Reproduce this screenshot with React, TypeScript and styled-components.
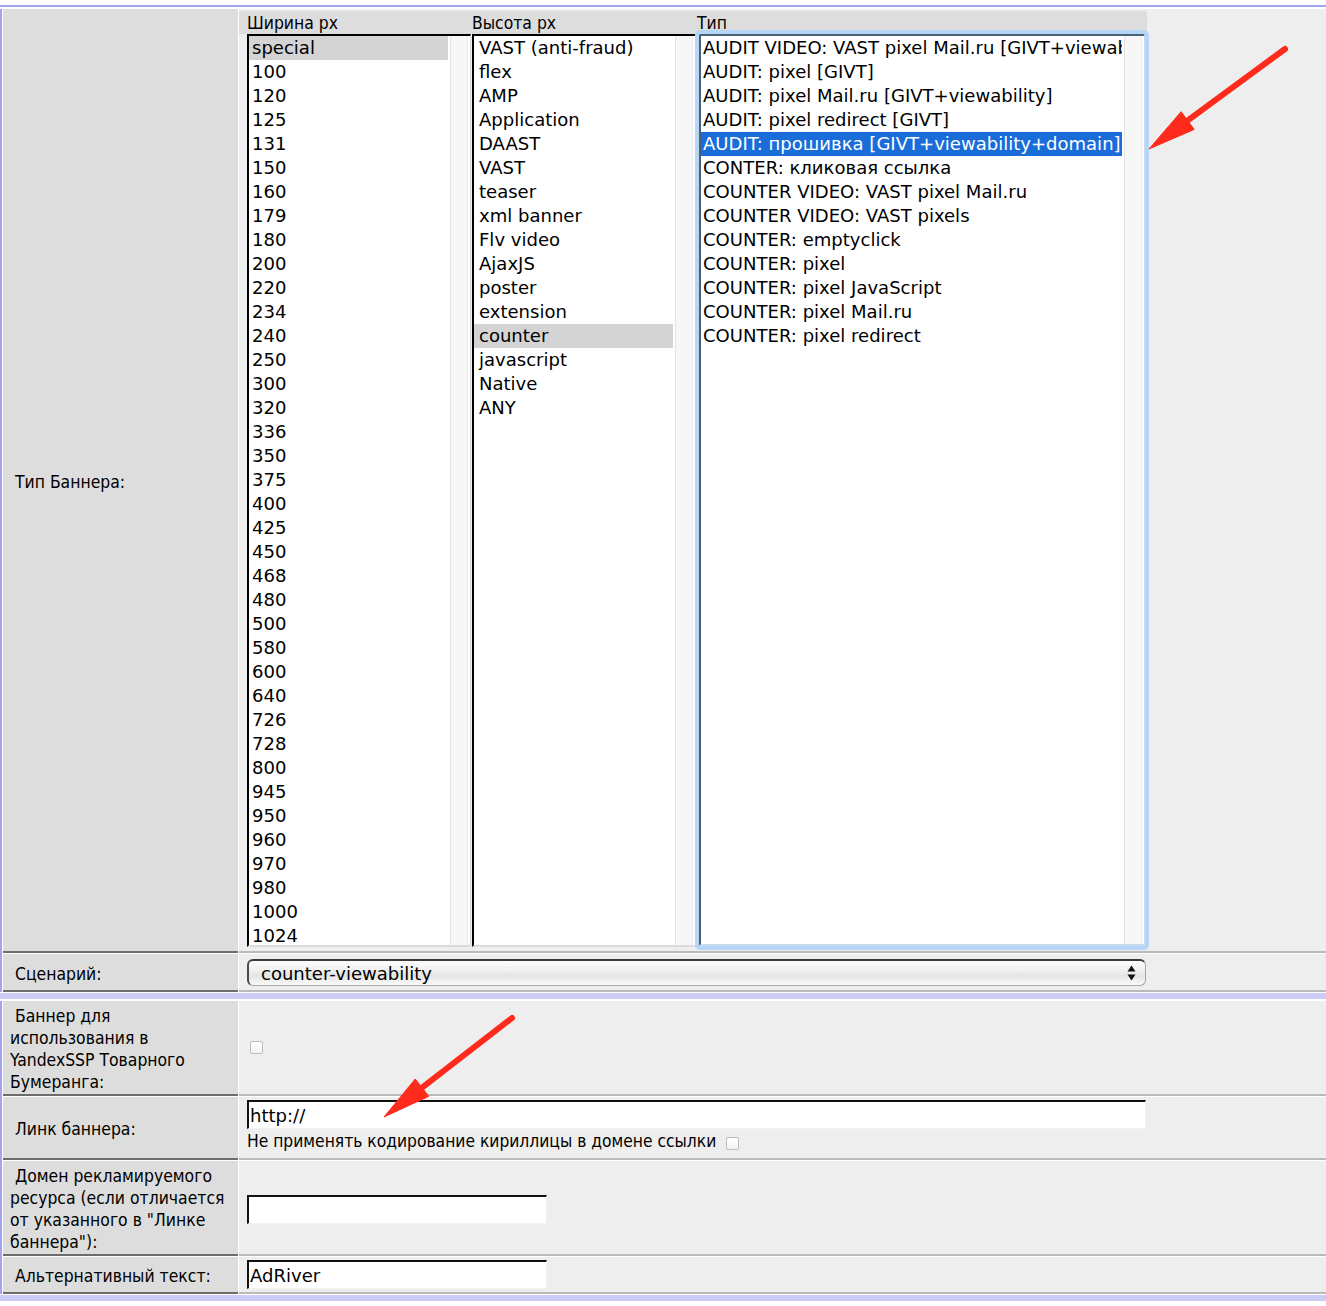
import React from "react";
import styled, { createGlobalStyle, css } from "styled-components";

const LABEL_FONT = `"DejaVu Sans Condensed", "DejaVu Sans", "Noto Sans", sans-serif`;
const CONTROL_FONT = `"DejaVu Sans", Verdana, sans-serif`;

const GlobalStyle = createGlobalStyle`
  html, body {
    margin: 0;
    padding: 0;
    background: #fff;
  }
  body {
    font-family: ${LABEL_FONT};
    color: #000;
  }
`;

const Page = styled.div`
  position: relative;
  width: 1326px;
  height: 1306px;
  overflow: hidden;
  padding-top: 5px;
  box-sizing: border-box;
`;

const TopLine = styled.div`
  height: 2px;
  background: #a3a3ef;
  margin-bottom: 2px;
`;

const Form = styled.div`
  border-left: 2px solid #a3a3ef;
  padding-left: 1px;
`;

const Row = styled.div`
  display: grid;
  grid-template-columns: 235px 1fr;
  column-gap: 1px;
  margin-bottom: 1px;
`;

const SectionBand = styled.div`
  height: 6px;
  background: #ccccf7;
  margin: 1px 0 2px;
`;

const LabelCell = styled.div`
  background: #dddddd;
  border-bottom: 2px solid #6c6c6c;
  padding: 4px 6px 1px 7px;
  display: flex;
  align-items: center;
  font-family: ${LABEL_FONT};
  font-size: 17.4px;
  line-height: 22px;
  white-space: nowrap;
`;

const ValueCell = styled.div<{ $pad?: string; $column?: boolean }>`
  background: #eeeeee;
  border-bottom: 2px solid #bababa;
  display: flex;
  flex-direction: ${(p) => (p.$column ? "column" : "row")};
  align-items: ${(p) => (p.$column ? "flex-start" : "center")};
  justify-content: ${(p) => (p.$column ? "center" : "flex-start")};
  padding: ${(p) => p.$pad ?? "0 0 0 8px"};
`;

/* ---- list boxes ---- */

const ListsBlock = styled.div`
  width: 908px;
`;

const ListGrid = styled.div<{ $header?: boolean }>`
  display: grid;
  grid-template-columns: 224px 224px 1fr;
  column-gap: 1px;
  padding-left: 8px;
  box-sizing: border-box;
  ${(p) =>
    p.$header &&
    css`
      height: 23px;
      background: #dddddd;
      align-items: center;
      font-family: ${LABEL_FONT};
      font-size: 17.4px;
    `}
`;

const ListBox = styled.div<{ $focused?: boolean }>`
  display: flex;
  height: 913px;
  box-sizing: border-box;
  background: #fff;
  overflow: hidden;
  border-top: 2px solid #000;
  border-left: 2px solid #000;
  border-right: 1px solid #d6d6d6;
  border-bottom: 2px solid #dcdcdc;
  ${(p) =>
    p.$focused &&
    css`
      margin: 0 2px;
      height: 912px;
      border-top-color: #4a5f78;
      border-left-color: #4a5f78;
      border-right-color: #c9dbee;
      border-bottom-color: #c9dbee;
      border-radius: 2px;
      box-shadow: 0 0 0 4px #b6d5f7;
    `}
`;

const Items = styled.div`
  flex: 1;
  min-width: 0;
  overflow: hidden;
`;

const Item = styled.div<{ $pad: number; $sel?: "active" | "inactive" }>`
  height: 24px;
  line-height: 24px;
  padding-left: ${(p) => p.$pad}px;
  white-space: nowrap;
  overflow: hidden;
  font-family: ${CONTROL_FONT};
  font-size: 18.05px;
  ${(p) =>
    p.$sel === "inactive" &&
    css`
      background: #d4d4d4;
    `}
  ${(p) =>
    p.$sel === "active" &&
    css`
      background: #1a6dd8;
      color: #fff;
    `}
`;

const Track = styled.div`
  width: 18px;
  margin: 0 2px;
  box-sizing: border-box;
  background: #f7f7f7;
  border-left: 1px solid #e3e3e3;
  border-right: 1px solid #ececec;
`;

/* ---- form controls ---- */

const SelectBox = styled.div`
  width: 899px;
  height: 27px;
  box-sizing: border-box;
  border-radius: 6px;
  border: 1px solid #a8a8a8;
  border-top: 2px solid #3a3a3a;
  border-left: 2px solid #4a4a4a;
  background: linear-gradient(#fdfdfd, #eeeeee 45%, #e4e4e4 60%, #fafafa);
  display: flex;
  align-items: center;
  justify-content: space-between;
  padding: 0 9px 0 12px;
  font-family: ${CONTROL_FONT};
  font-size: 18.05px;
`;

const TextInput = styled.div<{ $w: number }>`
  width: ${(p) => p.$w}px;
  height: 29px;
  box-sizing: border-box;
  background: #fff;
  border-top: 2px solid #111;
  border-left: 2px solid #111;
  border-right: 1px solid #f2f2f2;
  border-bottom: 1px solid #f2f2f2;
  padding-left: 1px;
  line-height: 27px;
  font-family: ${CONTROL_FONT};
  font-size: 18.05px;
  white-space: nowrap;
`;

const Checkbox = styled.span<{ $ml?: number }>`
  display: inline-block;
  width: 13px;
  height: 13px;
  box-sizing: border-box;
  margin-left: ${(p) => p.$ml ?? 3}px;
  margin-top: ${(p) => (p.$ml ? 4 : 0)}px;
  border: 1px solid #bdbdbd;
  border-radius: 2px;
  background: linear-gradient(#ffffff, #f4f4f4);
`;

const Note = styled.div`
  display: flex;
  align-items: center;
  height: 24px;
  font-family: ${LABEL_FONT};
  font-size: 17.3px;
  white-space: nowrap;
`;

const Arrows = styled.svg`
  position: absolute;
  left: 0;
  top: 0;
  pointer-events: none;
`;

const widths = [
  "special", "100", "120", "125", "131", "150", "160", "179", "180", "200",
  "220", "234", "240", "250", "300", "320", "336", "350", "375", "400",
  "425", "450", "468", "480", "500", "580", "600", "640", "726", "728",
  "800", "945", "950", "960", "970", "980", "1000", "1024",
];

const heights = [
  "VAST (anti-fraud)", "flex", "AMP", "Application", "DAAST", "VAST", "teaser",
  "xml banner", "Flv video", "AjaxJS", "poster", "extension", "counter",
  "javascript", "Native", "ANY",
];

const types = [
  "AUDIT VIDEO: VAST pixel Mail.ru [GIVT+viewability]",
  "AUDIT: pixel [GIVT]",
  "AUDIT: pixel Mail.ru [GIVT+viewability]",
  "AUDIT: pixel redirect [GIVT]",
  "AUDIT: прошивка [GIVT+viewability+domain]",
  "CONTER: кликовая ссылка",
  "COUNTER VIDEO: VAST pixel Mail.ru",
  "COUNTER VIDEO: VAST pixels",
  "COUNTER: emptyclick",
  "COUNTER: pixel",
  "COUNTER: pixel JavaScript",
  "COUNTER: pixel Mail.ru",
  "COUNTER: pixel redirect",
];

function List({
  items,
  selected,
  pad,
  focused,
}: {
  items: string[];
  selected: number;
  pad: number;
  focused?: boolean;
}) {
  return (
    <ListBox $focused={focused}>
      <Items>
        {items.map((it, i) => (
          <Item
            key={it + i}
            $pad={pad}
            $sel={i === selected ? (focused ? "active" : "inactive") : undefined}
          >
            {it}
          </Item>
        ))}
      </Items>
      <Track />
    </ListBox>
  );
}

function SelectArrows() {
  return (
    <svg width="9" height="16" viewBox="0 0 9 16">
      <path d="M4.5 0.5 L8.5 6.5 L0.5 6.5 Z" fill="#111" />
      <path d="M4.5 15.5 L8.5 9.5 L0.5 9.5 Z" fill="#111" />
    </svg>
  );
}

function Arrow({ x1, y1, tx, ty }: { x1: number; y1: number; tx: number; ty: number }) {
  const dx = tx - x1;
  const dy = ty - y1;
  const len = Math.hypot(dx, dy);
  const ux = dx / len;
  const uy = dy / len;
  const headLen = 48;
  const half = 11;
  const bx = tx - ux * headLen;
  const by = ty - uy * headLen;
  const px = -uy * half;
  const py = ux * half;
  return (
    <g fill="#fe2b1c" stroke="#fe2b1c">
      <line x1={x1} y1={y1} x2={bx + ux * 4} y2={by + uy * 4} strokeWidth={6} strokeLinecap="round" />
      <polygon points={`${tx},${ty} ${bx + px},${by + py} ${bx - px},${by - py}`} strokeWidth={1} />
    </g>
  );
}

export default function App() {
  return (
    <>
      <GlobalStyle />
      <Page>
        <TopLine />
        <Form>
          <Row>
            <LabelCell>&nbsp;Тип Баннера:</LabelCell>
            <ValueCell $pad="2px 0 4px 0" $column>
              <ListsBlock>
                <ListGrid $header>
                  <span>Ширина px</span>
                  <span>Высота px</span>
                  <span>Тип</span>
                </ListGrid>
                <ListGrid>
                  <List items={widths} selected={0} pad={3} />
                  <List items={heights} selected={12} pad={5} />
                  <List items={types} selected={4} pad={2} focused />
                </ListGrid>
              </ListsBlock>
            </ValueCell>
          </Row>
          <Row>
            <LabelCell>&nbsp;Сценарий:</LabelCell>
            <ValueCell $pad="5px 0 4px 8px">
              <SelectBox>
                <span>counter-viewability</span>
                <SelectArrows />
              </SelectBox>
            </ValueCell>
          </Row>
        </Form>
        <SectionBand />
        <Form>
          <Row>
            <LabelCell>
              <div>
                &nbsp;Баннер для
                <br />
                использования в
                <br />
                YandexSSP Товарного
                <br />
                Бумеранга:
              </div>
            </LabelCell>
            <ValueCell>
              <Checkbox />
            </ValueCell>
          </Row>
          <Row>
            <LabelCell>&nbsp;Линк баннера:</LabelCell>
            <ValueCell $pad="3px 0 5px 8px" $column>
              <TextInput $w={899}>http://</TextInput>
              <Note>
                Не применять кодирование кириллицы в домене ссылки
                <Checkbox $ml={10} />
              </Note>
            </ValueCell>
          </Row>
          <Row>
            <LabelCell>
              <div>
                &nbsp;Домен рекламируемого
                <br />
                ресурса (если отличается
                <br />
                от указанного в "Линке
                <br />
                баннера"):
              </div>
            </LabelCell>
            <ValueCell $pad="3px 0 0 8px">
              <TextInput $w={300} />
            </ValueCell>
          </Row>
          <Row>
            <LabelCell>&nbsp;Альтернативный текст:</LabelCell>
            <ValueCell $pad="3px 0 3px 8px">
              <TextInput $w={300}>AdRiver</TextInput>
            </ValueCell>
          </Row>
        </Form>
        <SectionBand />
        <Arrows width="1326" height="1306" viewBox="0 0 1326 1306">
          <Arrow x1={1285} y1={49} tx={1149} ty={149} />
          <Arrow x1={512} y1={1018} tx={384} ty={1117} />
        </Arrows>
      </Page>
    </>
  );
}
